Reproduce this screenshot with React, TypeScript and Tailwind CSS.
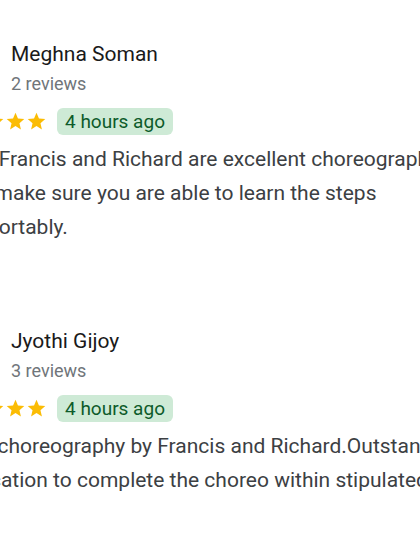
import React from 'react';

interface Review {
  name: string;
  reviewCount: string;
  time: string;
  text: string;
}

const reviews: Review[] = [
  {
    name: 'Meghna Soman',
    reviewCount: '2 reviews',
    time: '4 hours ago',
    text: 'Both Francis and Richard are excellent choreographers, they make sure you are able to learn the steps comfortably.',
  },
  {
    name: 'Jyothi Gijoy',
    reviewCount: '3 reviews',
    time: '4 hours ago',
    text: 'Nice choreography by Francis and Richard.Outstanding dedication to complete the choreo within stipulated time',
  },
];

const Star = () => (
  <svg viewBox="0 0 24 24" className="h-[21px] w-[21px] shrink-0" fill="#fbbc04">
    <path d="M12 17.27L18.18 21l-1.64-7.03L22 9.24l-7.19-.61L12 2 9.19 8.63 2 9.24l5.46 4.73L5.82 21z" />
  </svg>
);

const ReviewItem = ({ review }: { review: Review }) => (
  <div>
    {/* Author */}
    <div className="flex items-start gap-[21px]">
      <div className="h-[48px] w-[48px] shrink-0 rounded-full bg-[#7e57c2]" />
      <div>
        <div className="text-[21px] leading-[28px] text-[#1a1a1a]">{review.name}</div>
        <div className="mt-1 text-[18px] leading-[24px] text-[#70757a]">{review.reviewCount}</div>
      </div>
    </div>

    {/* Rating */}
    <div className="mt-3 flex h-[27px] items-center gap-[10px]">
      <div className="flex">
        <Star />
        <Star />
        <Star />
        <Star />
        <Star />
      </div>
      <span className="rounded-[6px] bg-[#ceead6] px-2 text-[19px] leading-[27px] text-[#0d5b2a]">
        {review.time}
      </span>
    </div>

    {/* Body */}
    <p className="mt-[7px] pl-[8px] text-[21px] leading-[34px] text-[#3c4043]">{review.text}</p>
  </div>
);

export default function App() {
  return (
    <div className="h-[560px] w-[420px] overflow-hidden bg-white font-['Roboto',sans-serif]">
      <div className="ml-[-58px] flex w-[543px] flex-col gap-[83px] pt-[40px]">
        {reviews.map((r) => (
          <ReviewItem key={r.name} review={r} />
        ))}
      </div>
    </div>
  );
}
